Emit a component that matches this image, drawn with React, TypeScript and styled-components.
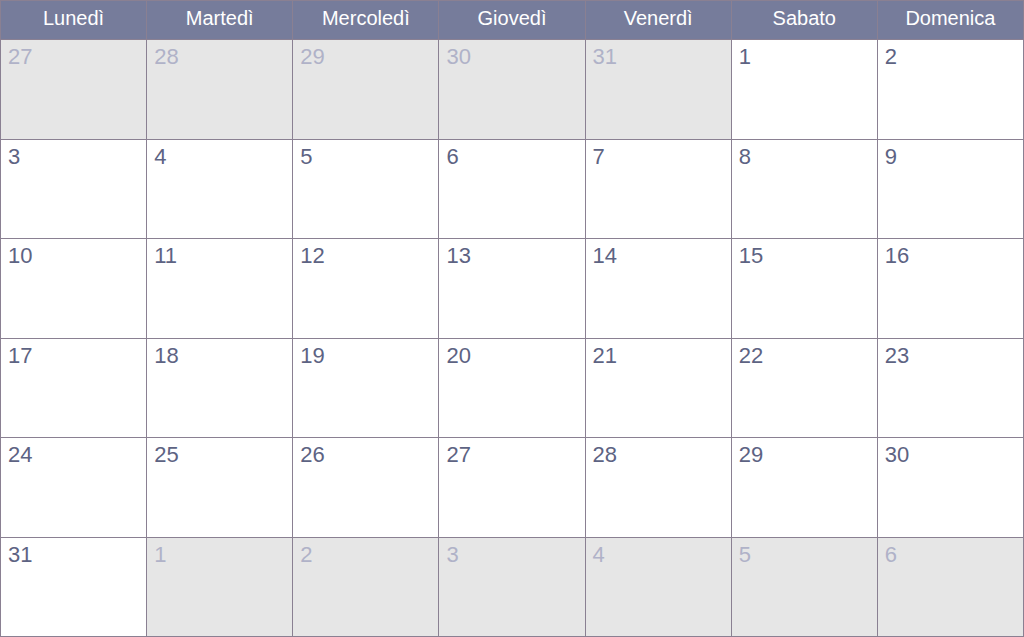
import React from "react";
import styled, { createGlobalStyle } from "styled-components";

const GlobalStyle = createGlobalStyle`
  html, body {
    margin: 0;
    padding: 0;
    background: #ffffff;
  }
  body {
    font-family: "Liberation Sans", Arial, Helvetica, sans-serif;
  }
`;

const days = ["Lunedì", "Martedì", "Mercoledì", "Giovedì", "Venerdì", "Sabato", "Domenica"];

type Cell = { n: number; muted: boolean };

const cells: Cell[] = [
  ...[27, 28, 29, 30, 31].map((n) => ({ n, muted: true })),
  ...Array.from({ length: 31 }, (_, i) => ({ n: i + 1, muted: false })),
  ...[1, 2, 3, 4, 5, 6].map((n) => ({ n, muted: true })),
];

const Calendar = styled.div`
  display: grid;
  grid-template-columns: repeat(7, 1fr);
  grid-template-rows: 38px repeat(6, 1fr);
  gap: 1px;
  padding: 1px;
  width: 1024px;
  height: 637px;
  box-sizing: border-box;
  background: #8a8092;
`;

const DayName = styled.div`
  background: #767c9b;
  color: #ffffff;
  font-size: 20px;
  display: flex;
  align-items: center;
  justify-content: center;
  padding-bottom: 3px;
`;

const Day = styled.div<{ $muted: boolean }>`
  background: ${(p) => (p.$muted ? "#e6e6e6" : "#ffffff")};
  color: ${(p) => (p.$muted ? "#b0b2c8" : "#5d6383")};
  font-size: 22px;
  line-height: 22px;
  padding: 6px 0 0 7px;
`;

export default function App() {
  return (
    <>
      <GlobalStyle />
      <Calendar>
        {days.map((d) => (
          <DayName key={d}>{d}</DayName>
        ))}
        {cells.map((c, i) => (
          <Day key={i} $muted={c.muted}>
            {c.n}
          </Day>
        ))}
      </Calendar>
    </>
  );
}
